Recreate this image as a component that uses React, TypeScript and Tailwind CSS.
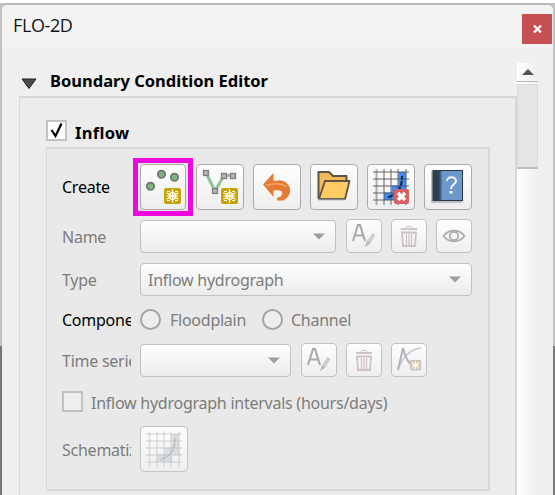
import React from "react";

type Box = { className?: string; children?: React.ReactNode };

const Sun = ({ x, y, fill, ink = "#fffbe6" }: { x: number; y: number; fill: string; ink?: string }) => (
  <g transform={`translate(${x} ${y})`}>
    <rect width="17" height="16" rx="2" fill={fill} />
    <path d="M8.500 1.200v13.600M2.500 4.700l12 6.600M2.500 11.300l12-6.600" stroke={ink} strokeWidth="1.300" />
    <path d="M3 3.500h3M11 3.500h3M3 12.500h3M11 12.500h3M2.500 8h12" stroke={ink} strokeWidth="1.200" />
    <circle cx="8.500" cy="8" r="3.300" fill="none" stroke={ink} strokeWidth="1.300" />
  </g>
);

const PointsIcon = () => (
  <svg className="h-full w-full" viewBox="1 1 44 44">
    <g fill="#80b384" stroke="#68766a" strokeWidth="1.700">
      <circle cx="10.500" cy="22.300" r="3.700" />
      <circle cx="21.500" cy="10.300" r="3.700" />
      <circle cx="34.500" cy="13.300" r="3.700" />
    </g>
    <Sun x={24} y={24} fill="#c8a200" />
  </svg>
);

const LineIcon = () => (
  <svg className="h-full w-full" viewBox="1 1 46 44">
    <path d="M10 9l9 18 9-15.500h9" fill="none" stroke="#8fc492" strokeWidth="3" />
    <g fill="#b5b5b5" stroke="#7d7d7d" strokeWidth="1.300">
      <rect x="7.500" y="6.500" width="5" height="5" />
      <rect x="16.500" y="24.500" width="5" height="5" />
      <rect x="25.500" y="9.500" width="5" height="5" />
      <rect x="34.500" y="9.500" width="5" height="5" />
    </g>
    <Sun x={25} y={24} fill="#c8a200" />
  </svg>
);

const UndoIcon = () => (
  <svg className="h-full w-full" viewBox="1 1 46 44">
    <path d="M10 20.500L20.500 9v7.500l3 .5c3-1.500 7-.5 10 2 6 5 4.500 14-3.500 17.500h-6v-3c4 0 6-3 5-5.500-1-2-4-2-8.500-1.500V33z" fill="#e37b35" />
    <path d="M13 21.500c7-2 15-3 20 1" fill="none" stroke="#f0a36c" strokeWidth="1.500" />
  </svg>
);

const FolderIcon = () => (
  <svg className="h-full w-full" viewBox="1 1 46 44" strokeLinejoin="round">
    <path d="M8.500 34.500V8H19l4 4h13.500v5" fill="#f2ba5c" stroke="#5c5546" strokeWidth="2" />
    <path d="M9 35L15 17h24.500l-4.500 18z" fill="#ffcb64" stroke="#5c5546" strokeWidth="1.800" />
    <path d="M8 35.500h27" stroke="#8c8c8c" strokeWidth="1.500" />
  </svg>
);

const GridIcon = ({ muted = false }: { muted?: boolean }) => (
  <svg className="h-full w-full" viewBox="1 1 46 44">
    <path d="M31.500 8H39v21h-7v7H17v-7.500h7.500v-7h7z" fill={muted ? "#d8dde3" : "#3c8cff"} />
    <g fill="none" stroke={muted ? "#c4c4c4" : "#555555"} strokeOpacity={muted ? 0.4 : 0.45} strokeWidth="2">
      <path d="M9.500 5v36M17 5v36M24 5v36M31 5v36M39 5v36" />
      <path d="M6 8h36M6 15h36M6 22h36M6 29h36M6 36h36" />
    </g>
    <path d="M21 33c9-2 14-8 14-21" fill="none" stroke={muted ? "#aaaaaa" : "#15243c"} strokeWidth={muted ? 1 : 2} strokeDasharray="5 1" />
    {!muted && (
      <g>
        <rect x="27" y="25" width="15" height="15" rx="2" fill="#d66062" />
        <path d="M31 29l7 7M38 29l-7 7" stroke="white" strokeWidth="3.500" />
      </g>
    )}
  </svg>
);

const HelpBook = () => (
  <svg className="h-full w-full" viewBox="1 1 46 44">
    <path d="M7 7h31v32H7z" fill="#bdbdbd" />
    <rect x="9" y="6.500" width="29.500" height="30" fill="#6c99c9" stroke="#293744" />
    <path d="M9 6h7v31H9z" fill="#2d3e4f" />
    <path d="M16.500 7v29" stroke="#44617e" strokeWidth="2" />
    <path d="M23 17c0-5 9-5 9 0 0 4-5 3-5 8" fill="none" stroke="#f3f8fc" strokeWidth="2" />
    <path d="M25.500 27h3v2.500h-3z" fill="#f3f8fc" />
  </svg>
);

const RenameIcon = () => (
  <svg className="h-full w-full" viewBox="1 1 34 32">
    <path d="M7 22L12 6h2l5 16M9 16.500h8" fill="none" stroke="#a8a8a8" strokeWidth="2" />
    <path d="M19 28l2-6 5.500-8 3 2-5.500 9z" fill="#d3cdc9" />
    <path d="M19 28l2-6 3 2.500z" fill="#bcb9b7" />
  </svg>
);

const TrashIcon = () => (
  <svg className="h-full w-full" viewBox="1 1 34 32" fill="none" stroke="#cfc2c2">
    <path d="M10 10h16" strokeWidth="2" />
    <path d="M14.500 8.500c1-1.500 6-1.500 7 0" />
    <path d="M11 13.500h14L24 27H12z" strokeWidth="1.800" />
    <path d="M15.500 15v11M18 15v11M20.500 15v11" strokeWidth="1.200" />
  </svg>
);

const EyeIcon = () => (
  <svg className="h-full w-full" viewBox="1 1 34 32" fill="none" stroke="#adadad" strokeWidth="1.800">
    <path d="M7.500 17c5-7 16-7 21 0-5 7-16 7-21 0z" />
    <circle cx="18" cy="17" r="4.200" />
  </svg>
);

const CurveIcon = () => (
  <svg className="h-full w-full" viewBox="1 1 34 32" fill="none">
    <path d="M7 26c5-12 12-20 23-21" stroke="#d0cedf" strokeWidth="2" />
    <path d="M7 27L12 5c2 9 5 16 12 19" stroke="#b3b3b3" strokeWidth="2" />
    <g transform="translate(19 17) scale(.65)">
      <Sun x={0} y={0} fill="#c9c5b7" />
    </g>
  </svg>
);

const Tool = ({ className = "w-12 border-[#aaaaaa]", children }: Box) => (
  <button className={`block h-[46px] shrink-0 rounded-[4px] border bg-linear-to-b from-[#fefefe] to-[#eeeeee] ${className}`}>
    {children}
  </button>
);

const SmallTool = ({ children }: Box) => (
  <button className="block h-[34px] w-9 shrink-0 rounded-[4px] border border-[#c2c2c2] bg-linear-to-b from-[#fdfdfd] to-[#eeeeee]">{children}</button>
);

const Combo = ({ className = "", children }: Box) => (
  <div className={`flex h-[33px] shrink-0 items-center justify-between rounded-[4px] border border-[#c0c0c0] bg-linear-to-b from-[#fefefe] to-[#ebebeb] pr-[10px] pl-[7px] ${className}`}>
    <span>{children}</span>
    <svg className="h-[7px] w-3" viewBox="0 0 12 7">
      <path d="M0 .5h12L6 6.500z" fill="#9e9e9e" />
    </svg>
  </div>
);

const Label = ({ className = "pt-px", children }: Box) => (
  <div className={`mr-[9px] w-[69px] shrink-0 overflow-hidden whitespace-nowrap ${className}`}>{children}</div>
);

const Row = ({ className = "", children }: Box) => <div className={`flex items-center ${className}`}>{children}</div>;

export default function App() {
  return (
    <div className="flex h-[495px] w-[555px] overflow-hidden bg-linear-to-b from-[#c2c2c2] from-70% to-[#777777] to-70% font-['Noto_Sans','Open_Sans',sans-serif] text-[16px] leading-[22px] tracking-[-0.25px] text-[#7c7c7c]">
      <div className="flex w-full flex-col border-t-[3px] border-white px-[2px]">
        <div className="flex h-[492px] w-[551px] flex-col rounded-t-[6px] border-t-2 border-[#b9b9b9] bg-[#efefef]">
          <header className="flex h-[43px] shrink-0 items-start justify-between rounded-t-[5px] bg-[#f3f3f3] pr-px pl-[11px]">
            <h1 className="mt-[9px] font-['Open_Sans','Noto_Sans',sans-serif] text-[18px] tracking-[-0.4px] text-[#151515]">FLO-2D</h1>
            <button className="mt-[9px] flex h-[30px] w-[30px] items-center justify-center bg-[#c75052]">
              <svg className="h-2 w-[9px]" viewBox="0 0 9 8"><path d="M1 .5l7 7M8 .5l-7 7" stroke="white" strokeWidth="2.200" /></svg>
            </button>
          </header>
          <main className="flex h-[447px]">
            <section className="ml-[17px] w-[498px] shrink-0">
              <div className="flex h-12 items-center gap-[13px] pt-[17px] pl-[2px] font-bold text-black">
                <svg className="mt-[6px] h-3 w-4" viewBox="0 0 16 12"><path d="M1 1h14l-7 9.500z" fill="#4c4c4c" stroke="#222222" /></svg>
                <h2 className="text-[16.5px] tracking-[0px]">Boundary Condition Editor</h2>
              </div>
              <div className="h-[399px] border-2 border-b-0 border-l border-[#d7d7d7] bg-[#ececec] pl-[26px]">
                <div className="flex h-[49px] items-center gap-[8px] pt-[17px] font-bold text-black">
                  <span className="mb-[2px] flex h-[21px] w-[21px] items-center justify-center border-2 border-[#c2c2c2] bg-white">
                    <svg className="h-4 w-4" viewBox="0 0 16 16"><path d="M2.500 8l4 6L12.500 1.500" fill="none" stroke="black" strokeWidth="2.200" /></svg>
                  </span>
                  <h3 className="pt-[3px] text-[16.5px] tracking-[0.3px]">Inflow</h3>
                </div>
                <div className="h-[344px] w-[444px] border-2 border-l border-[#d7d7d7] bg-[#e9e9e9] pl-[15px]">
                  <Row className="h-[61px] pt-[15px]">
                    <Label className="pb-px text-black">Create</Label>
                    <div className="flex gap-[9px]">
                      <div className="-my-[6px] -mr-[6px] -ml-[7px] border-5 border-[#ef07de] px-[2px] py-px">
                        <Tool className="w-[46px] border-[#aaaaaa]"><PointsIcon /></Tool>
                      </div>
                      <Tool><LineIcon /></Tool><Tool><UndoIcon /></Tool><Tool><FolderIcon /></Tool><Tool><GridIcon /></Tool><Tool><HelpBook /></Tool>
                    </div>
                  </Row>
                  <Row className="mt-[9px] h-[34px]">
                    <Label>Name</Label><Combo className="mr-[10px] w-[196px]" />
                    <div className="flex gap-[9px]"><SmallTool><RenameIcon /></SmallTool><SmallTool><TrashIcon /></SmallTool><SmallTool><EyeIcon /></SmallTool></div>
                  </Row>
                  <Row className="mt-[10px] h-[33px]"><Label>Type</Label><Combo className="w-[332px]">Inflow hydrograph</Combo></Row>
                  <Row className="mt-[12px] h-[22px]">
                    <Label className="pt-px text-black">Component</Label>
                    <span className="mr-[9px] h-[21px] w-[21px] rounded-full border-2 border-[#a5a5a5] bg-[#eeeeee]" />
                    <span className="w-[92px] pt-px">Floodplain</span>
                    <span className="mr-[8px] h-[21px] w-[21px] rounded-full border-2 border-[#a5a5a5] bg-[#eeeeee]" />
                    <span className="pt-px">Channel</span>
                  </Row>
                  <Row className="mt-[13px] h-[34px]">
                    <Label>Time series</Label><Combo className="mr-[10px] w-[151px]" />
                    <div className="flex gap-[9px]"><SmallTool><RenameIcon /></SmallTool><SmallTool><TrashIcon /></SmallTool><SmallTool><CurveIcon /></SmallTool></div>
                  </Row>
                  <Row className="mt-[13px] h-[22px]">
                    <span className="mr-[8px] h-[21px] w-[21px] border-2 border-[#c0c0c0] bg-[#eeeeee]" />
                    <span className="pt-[3px]">Inflow hydrograph intervals (hours/days)</span>
                  </Row>
                  <Row className="mt-[14px] h-[46px]"><Label>Schematize</Label><Tool className="w-12 border-[#c4c4c4]"><GridIcon muted /></Tool></Row>
                </div>
              </div>
            </section>
            <aside className="mt-[15px] flex h-[432px] w-[21px] flex-col bg-linear-to-r from-white to-[#efefef]">
              <div className="flex h-[19px] items-center justify-center border-b border-[#b4b4b4]"><svg className="h-[6px] w-3" viewBox="0 0 12 6"><path d="M0 6h12L6 0z" fill="#555555" /></svg></div>
              <div className="mt-[2px] h-[85px] border border-b-2 border-[#dadada] border-b-[#bdbdbd] bg-[#e5e5e5]" />
            </aside>
          </main>
        </div>
      </div>
    </div>
  );
}
